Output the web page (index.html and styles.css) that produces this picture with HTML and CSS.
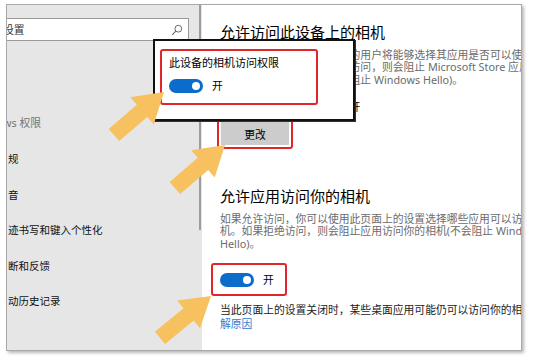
FILE: index.html
```html
<!DOCTYPE html>
<html lang="zh-CN">
<head>
<meta charset="utf-8">
<title>相机隐私设置</title>
<link rel="stylesheet" href="styles.css">
</head>
<body>
<div class="stage">
  <div class="frame">
    <aside class="sidebar">
      <div class="side-main">
        <div class="search">
          <span class="search-text">设置</span>
          <svg class="search-icon" width="12" height="12" viewBox="0 0 12 12"><circle cx="7.3" cy="4.7" r="3.4" fill="none" stroke="#666" stroke-width="1"/><line x1="4.8" y1="7.2" x2="1.2" y2="10.8" stroke="#666" stroke-width="1.1"/></svg>
        </div>
        <div class="nav">
          <div class="nav-head">ws 权限</div>
          <div class="nav-item">规</div>
          <div class="nav-item">音</div>
          <div class="nav-item">迹书写和键入个性化</div>
          <div class="nav-item">断和反馈</div>
          <div class="nav-item">动历史记录</div>
        </div>
      </div>
      <div class="scroll-thumb"></div>
    </aside>
    <main class="content">
      <h2 class="title">允许访问此设备上的相机</h2>
      <div class="desc">
        <div class="line">如果允许访问，使用此设备的用户将能够选择其应用是否可以使用</div>
        <div class="line">相机。但如果你拒绝此设备访问，则会阻止 Microsoft Store 应用和大多数桌面应用访问相机</div>
        <div class="line">应用访问你的相机（它不会阻止 Windows Hello)。</div>
      </div>
      <div class="status">此设备的相机访问权限已打开</div>
      <div class="hl btn-hl"><button class="btn" type="button">更改</button></div>
      <h2 class="title title-2">允许应用访问你的相机</h2>
      <div class="desc">
        <div class="line">如果允许访问，你可以使用此页面上的设置选择哪些应用可以访问你的相</div>
        <div class="line">机。如果拒绝访问，则会阻止应用访问你的相机(不会阻止 Windows</div>
        <div class="line">Hello)。</div>
      </div>
      <div class="hl toggle-hl"><span class="toggle"><span class="knob"></span></span><span class="toggle-label">开</span></div>
      <div class="note">
        <div class="line">当此页面上的设置关闭时，某些桌面应用可能仍可以访问你的相机。了</div>
        <div class="line"><a class="link" href="#">解原因</a></div>
      </div>
    </main>
  </div>

  <div class="popup">
    <div class="hl popup-hl">
      <div class="popup-title">此设备的相机访问权限</div>
      <div class="popup-row"><span class="toggle"><span class="knob"></span></span><span class="toggle-label">开</span></div>
    </div>
  </div>

  <svg class="arrows" width="533" height="363" viewBox="0 0 533 363">
    <g fill="#f6c15e">
      <polygon points="0,-8 37,-8 37,-18 66,0 37,18 37,8 0,8" transform="translate(164 92) rotate(-40.7) translate(-66 0)"/>
      <polygon points="0,-8 37,-8 37,-18 66,0 37,18 37,8 0,8" transform="translate(225 145) rotate(-40.6) translate(-66 0)"/>
      <polygon points="0,-8 37,-8 37,-18 66,0 37,18 37,8 0,8" transform="translate(211 296) rotate(-39.4) translate(-66 0)"/>
    </g>
  </svg>
</div>
</body>
</html>
```

FILE: styles.css
```css
* { box-sizing: border-box; }

html, body {
  margin: 0;
  padding: 0;
  background: #ffffff;
}

body {
  font-family: "Noto Sans", "Noto Sans CJK SC", sans-serif;
  color: #000;
  width: 533px;
  height: 363px;
  overflow: hidden;
}

.stage {
  position: relative;
  width: 533px;
  height: 363px;
  padding: 4px 0 0 6px;
}

.frame {
  width: 516px;
  height: 347px;
  border: 1px solid #a9a9a9;
  box-shadow: 2px 2px 3px rgba(0, 0, 0, 0.28);
  display: flex;
  overflow: hidden;
  background: #fff;
}

/* ---------- sidebar ---------- */
.sidebar {
  width: 195px;
  flex: none;
  background: #e6e6e6;
  display: flex;
  padding-right: 1px;
  overflow: hidden;
}

.side-main {
  flex: 1;
  min-width: 0;
  padding-top: 13px;
  overflow: hidden;
}

.scroll-thumb {
  width: 2px;
  height: 225px;
  background: #9c9c9c;
  flex: none;
}

.search {
  width: 182px;
  height: 23px;
  background: #fff;
  border: 1px solid #9a9a9a;
  border-left: none;
  display: flex;
  align-items: center;
  justify-content: space-between;
  padding-right: 5px;
}

.search-text {
  font-size: 10.8px;
  color: #333;
  margin-left: -4px;
  line-height: 14px;
}

.search-icon { flex: none; }

.nav {
  margin-top: 72px;
  font-size: 10.5px;
}

.nav-head {
  height: 20px;
  line-height: 20px;
  color: #767676;
  margin-left: -4px;
  margin-bottom: 9px;
  white-space: nowrap;
  font-size: 10.8px;
}

.nav-item {
  height: 35.5px;
  line-height: 35.5px;
  margin-left: 1px;
  white-space: nowrap;
  color: #111;
}

/* ---------- content ---------- */
.content {
  flex: 1;
  min-width: 0;
  padding: 17px 0 0 18px;
  overflow: hidden;
  background: #fff;
}

.title {
  margin: 0;
  font-size: 15px;
  line-height: 20px;
  font-weight: 400;
  color: #000;
  white-space: nowrap;
}

.title-2 { margin-top: 37px; }

.desc {
  margin-top: 6.75px;
  font-size: 10.8px;
  line-height: 12.5px;
  color: #6b6b6b;
}

.line { white-space: nowrap; }

.status {
  margin-top: 13.75px;
  font-size: 10.8px;
  line-height: 14px;
  white-space: nowrap;
}

.hl {
  border: 2px solid #e1262b;
  border-radius: 3px;
}

.btn-hl {
  margin-top: 4px;
  margin-left: -3px;
  width: 76px;
  height: 31px;
  padding: 2px;
}

.btn {
  display: block;
  width: 68px;
  height: 23px;
  border: none;
  margin: 0;
  padding: 0;
  background: #cccccc;
  font-family: inherit;
  font-size: 10.8px;
  color: #000;
}

.toggle-hl {
  margin-top: 12.75px;
  margin-left: -9px;
  width: 76px;
  height: 33px;
  padding-left: 7px;
  display: flex;
  align-items: center;
  gap: 9px;
}

.toggle {
  position: relative;
  display: block;
  flex: none;
  width: 34px;
  height: 14px;
  border-radius: 7px;
  background: #0b6ccc;
}

.knob {
  position: absolute;
  right: 3px;
  top: 3px;
  width: 8px;
  height: 8px;
  border-radius: 50%;
  background: #fff;
}

.toggle-label {
  font-size: 10.8px;
  line-height: 14px;
}

.note {
  margin-top: 7px;
  font-size: 10.8px;
  line-height: 14px;
  color: #222;
}

.link {
  color: #2f80d0;
  text-decoration: none;
}

/* ---------- popup overlay ---------- */
.popup {
  position: absolute;
  left: 153px;
  top: 39px;
  width: 202px;
  height: 82px;
  background: #fff;
  border: 2px solid #111;
  box-shadow: 1px 1px 0 #333;
  padding: 8px 0 0 5px;
}

.popup-hl {
  width: 158px;
  height: 56px;
  padding: 5px 0 0 7px;
}

.popup-title {
  font-size: 11px;
  line-height: 14px;
  white-space: nowrap;
}

.popup-row {
  margin-top: 9px;
  display: flex;
  align-items: center;
  gap: 9px;
}

.arrows {
  position: absolute;
  left: 0;
  top: 0;
  pointer-events: none;
}
```
